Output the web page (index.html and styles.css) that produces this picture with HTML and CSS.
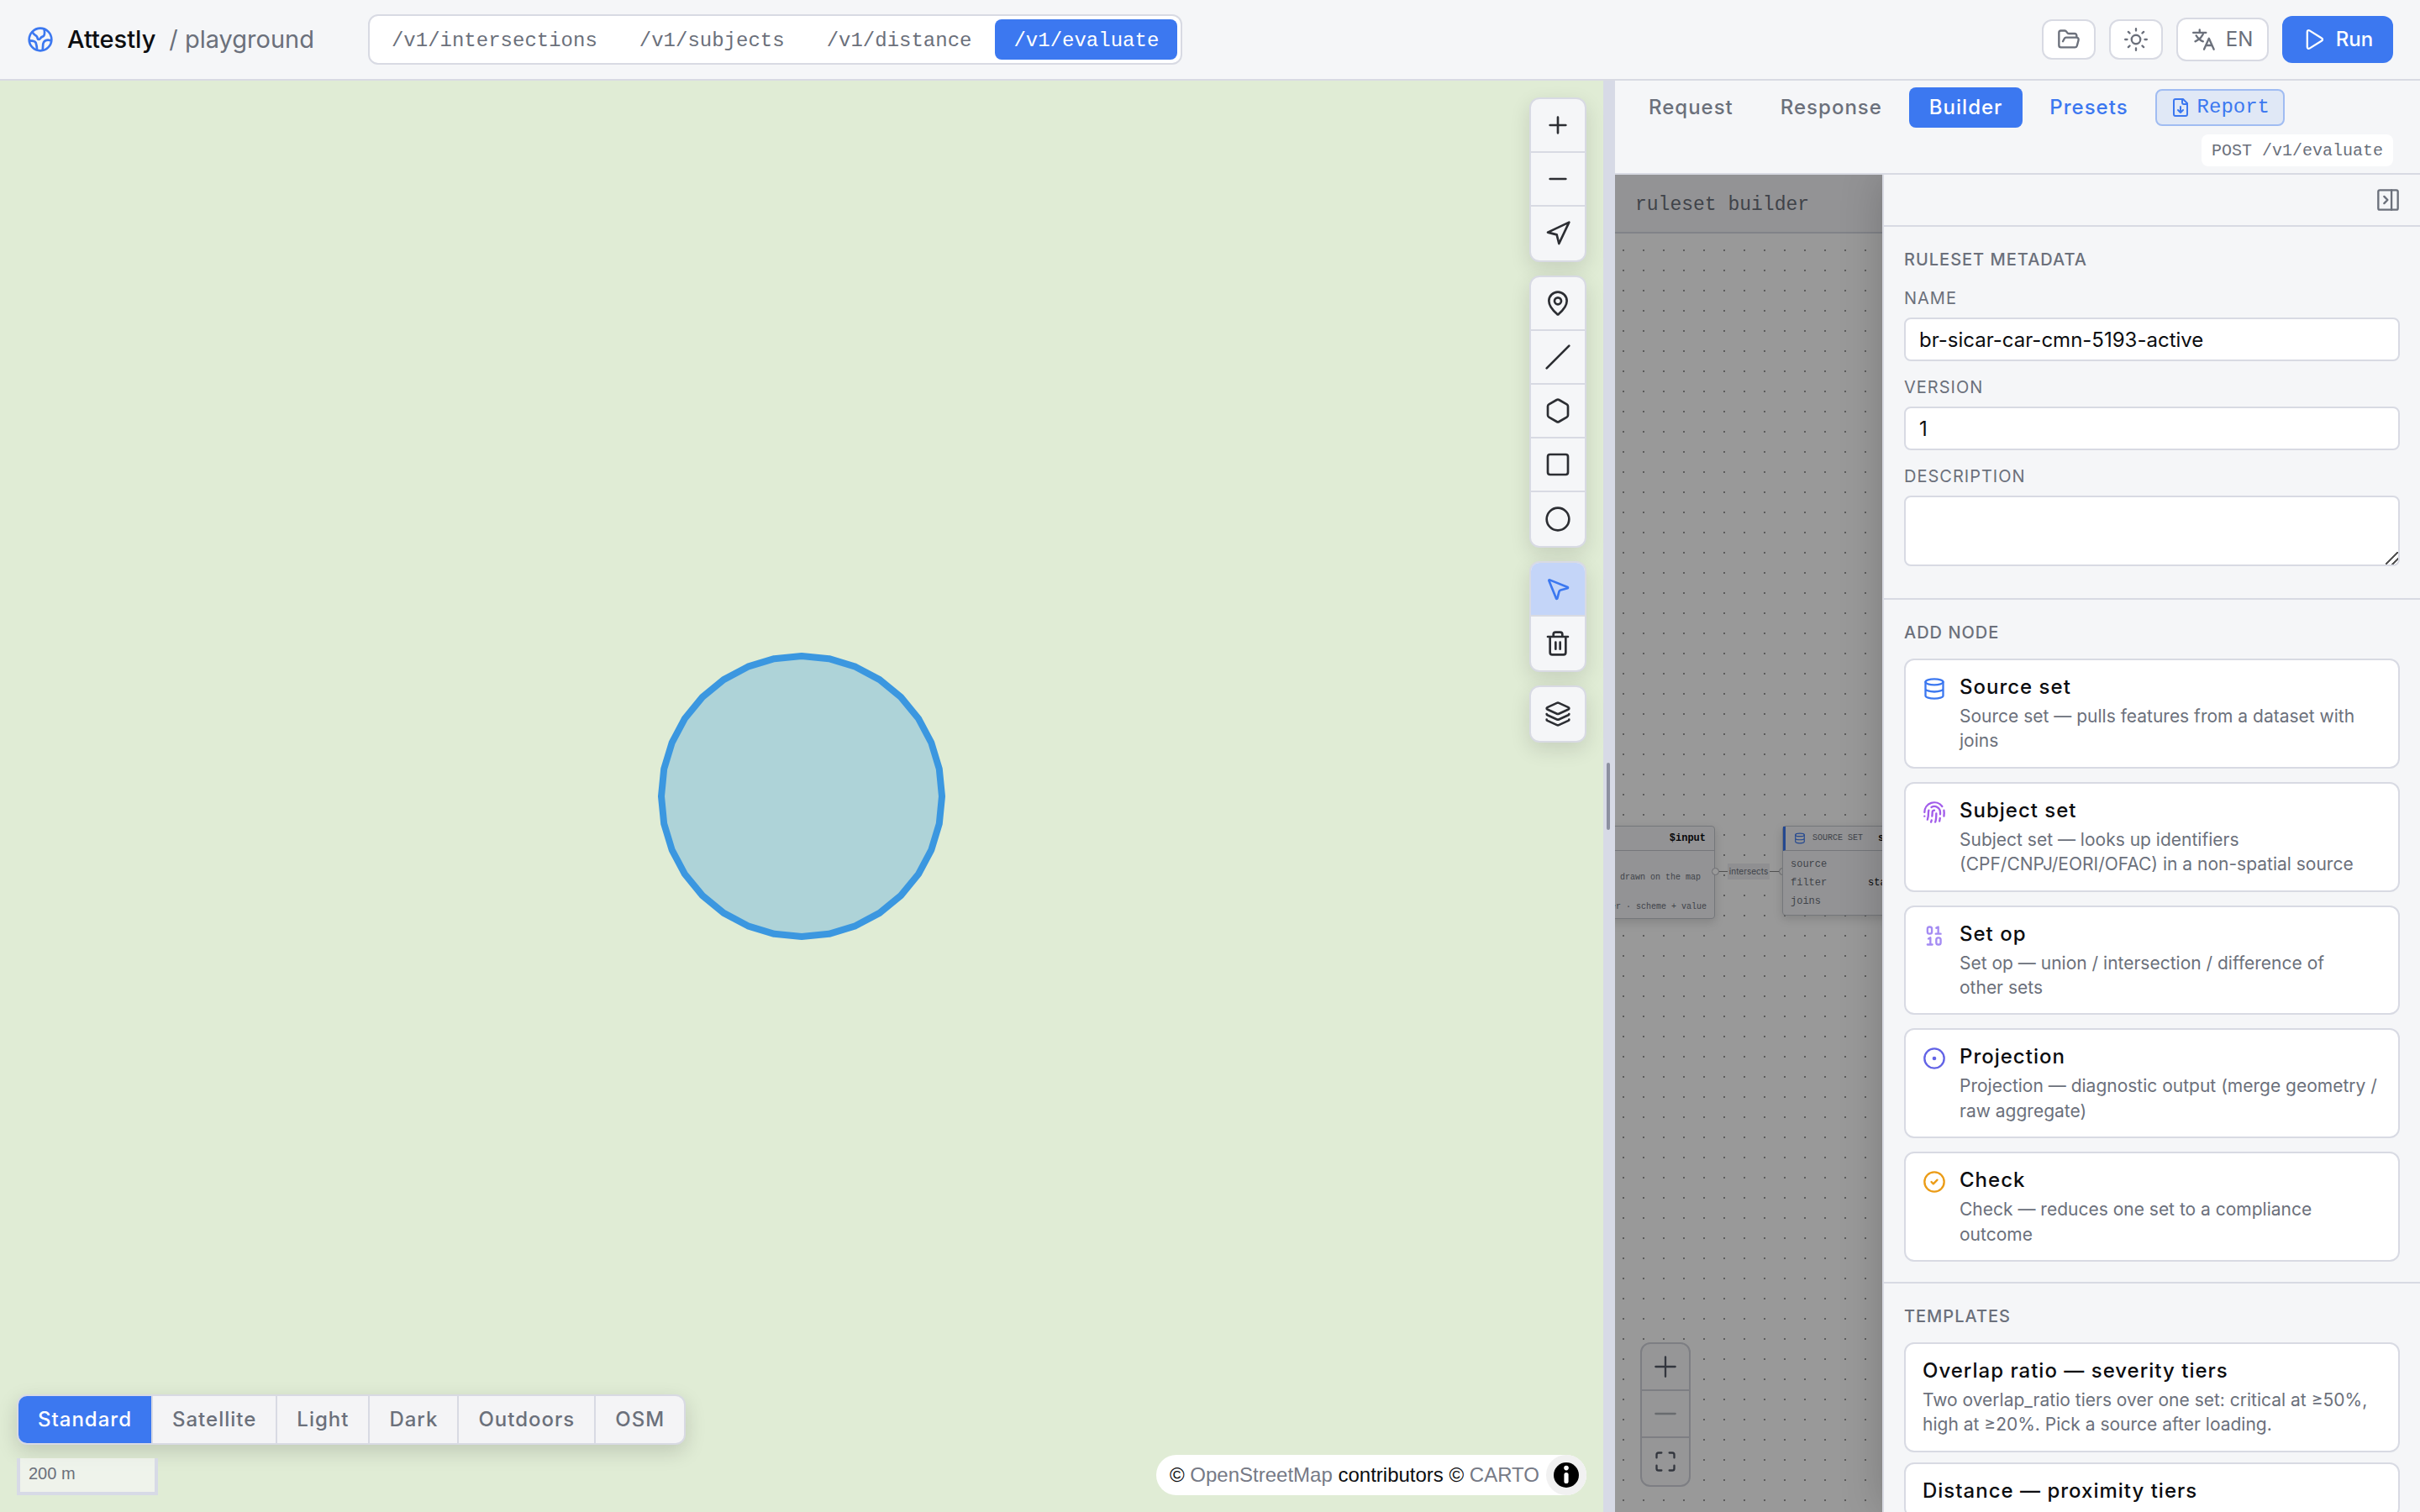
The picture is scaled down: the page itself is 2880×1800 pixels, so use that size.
FILE: index.html
```html
<!DOCTYPE html>
<html lang="en">
<head>
<meta charset="utf-8">
<title>Attestly / playground</title>
<link rel="stylesheet" href="styles.css">
</head>
<body>
<div class="app">
  <header class="topbar">
    <a class="brand" href="#">
      <svg class="icon icon-lg brand-mark" viewBox="0 0 24 24"><circle cx="12" cy="12" r="10"/><path d="M5 5.500c1 2.500 3 2.500 4 4s0 2.500 1.500 2.500S12 10 14 9.500s2-3.500 1.500-6.500M2.500 13c3 0 5 .5 5.500 2s1 3 1 6M21.500 13c-3-1-5.500 0-6.500 1.500s-.5 4-1 7"/></svg>
      <span class="brand-name">Attestly</span>
      <span class="brand-sub">/ playground</span>
    </a>
    <nav class="endpoints" aria-label="Endpoint">
      <button class="endpoint">/v1/intersections</button>
      <button class="endpoint">/v1/subjects</button>
      <button class="endpoint">/v1/distance</button>
      <button class="endpoint is-active">/v1/evaluate</button>
    </nav>
    <div class="actions">
      <button class="action action-icon" aria-label="Open">
        <svg class="icon" viewBox="0 0 24 24"><path d="m6 14 1.500-2.900A2 2 0 0 1 9.240 10H20a2 2 0 0 1 1.940 2.500l-1.540 6a2 2 0 0 1-1.950 1.500H4a2 2 0 0 1-2-2V5a2 2 0 0 1 2-2h3.900a2 2 0 0 1 1.690.9l.81 1.200a2 2 0 0 0 1.670.9H18a2 2 0 0 1 2 2v2"/></svg>
      </button>
      <button class="action action-icon" aria-label="Theme">
        <svg class="icon" viewBox="0 0 24 24"><circle cx="12" cy="12" r="4.500"/><path d="M12 1v2M12 21v2M4.200 4.200l1.400 1.400M18.400 18.400l1.400 1.400M1 12h2M21 12h2M5.600 18.400l-1.400 1.400M19.800 4.200l-1.400 1.400"/></svg>
      </button>
      <button class="action action-lang">
        <svg class="icon" viewBox="0 0 24 24"><path d="M1 5h13M7.500 2v3M11.500 5c-1 4-4 7-8.500 9M4 8c2 3 4 5 7 6M12 22l5-11 5 11M14 18h6"/></svg>
        EN
      </button>
      <button class="action action-run">
        <svg class="icon" viewBox="0 0 24 24"><path d="M5 4.200v15.600a1.500 1.500 0 0 0 2.300 1.300l12.500-7.800a1.500 1.500 0 0 0 0-2.600L7.300 2.900A1.500 1.500 0 0 0 5 4.200z"/></svg>
        Run
      </button>
    </div>
  </header>

  <main class="workspace">
    <section class="map" aria-label="Map">
      <svg class="shape" viewBox="-180 -180 360 360"><polygon id="area" points=""/></svg>

      <div class="tools">
        <div class="tool-group">
          <button class="tool" aria-label="Zoom in"><svg class="icon icon-lg" viewBox="0 0 24 24"><path d="M5 12h14M12 5v14"/></svg></button>
          <button class="tool" aria-label="Zoom out"><svg class="icon icon-lg" viewBox="0 0 24 24"><path d="M5 12h14"/></svg></button>
          <button class="tool" aria-label="Locate"><svg class="icon icon-lg" viewBox="0 0 24 24"><path d="M3 11 22 2l-9 19-2-8z"/></svg></button>
        </div>
        <div class="tool-group">
          <button class="tool" aria-label="Point"><svg class="icon icon-lg" viewBox="0 0 24 24"><path d="M20 10c0 5-5.540 10.190-7.400 11.800a1 1 0 0 1-1.200 0C9.540 20.190 4 15 4 10a8 8 0 0 1 16 0"/><circle cx="12" cy="10" r="3"/></svg></button>
          <button class="tool" aria-label="Line"><svg class="icon icon-lg" viewBox="0 0 24 24"><path d="M22 2 2 22"/></svg></button>
          <button class="tool" aria-label="Polygon"><svg class="icon icon-lg" viewBox="0 0 24 24"><path d="M21 16V8a2 2 0 0 0-1-1.730l-7-4a2 2 0 0 0-2 0l-7 4A2 2 0 0 0 3 8v8a2 2 0 0 0 1 1.730l7 4a2 2 0 0 0 2 0l7-4A2 2 0 0 0 21 16z"/></svg></button>
          <button class="tool" aria-label="Rectangle"><svg class="icon icon-lg" viewBox="0 0 24 24"><rect x="3" y="3" width="18" height="18" rx="2"/></svg></button>
          <button class="tool" aria-label="Circle"><svg class="icon icon-lg" viewBox="0 0 24 24"><circle cx="12" cy="12" r="10"/></svg></button>
        </div>
        <div class="tool-group">
          <button class="tool is-active" aria-label="Select"><svg class="icon icon-lg" viewBox="0 0 24 24"><path d="M4.040 4.690a.5.5 0 0 1 .65-.65l16 6.500a.5.5 0 0 1-.06.950l-6.130 1.580a2 2 0 0 0-1.430 1.430l-1.580 6.130a.5.5 0 0 1-.950.06z"/></svg></button>
          <button class="tool" aria-label="Delete"><svg class="icon icon-lg" viewBox="0 0 24 24"><path d="M3 6h18M19 6v14a2 2 0 0 1-2 2H7a2 2 0 0 1-2-2V6M8 6V4a2 2 0 0 1 2-2h4a2 2 0 0 1 2 2v2M10 11v6M14 11v6"/></svg></button>
        </div>
        <div class="tool-group">
          <button class="tool" aria-label="Layers"><svg class="icon icon-lg" viewBox="0 0 24 24"><path d="M12.830 2.180a2 2 0 0 0-1.660 0L2.600 6.080a1 1 0 0 0 0 1.830l8.580 3.910a2 2 0 0 0 1.660 0l8.580-3.900a1 1 0 0 0 0-1.830zM2 12a1 1 0 0 0 .58.910l8.600 3.910a2 2 0 0 0 1.650 0l8.580-3.900A1 1 0 0 0 22 12M2 17a1 1 0 0 0 .58.910l8.600 3.910a2 2 0 0 0 1.650 0l8.580-3.900A1 1 0 0 0 22 17"/></svg></button>
        </div>
      </div>

      <div class="map-footer">
        <div class="map-left">
          <div class="basemaps">
            <button class="basemap is-active">Standard</button>
            <button class="basemap">Satellite</button>
            <button class="basemap">Light</button>
            <button class="basemap">Dark</button>
            <button class="basemap">Outdoors</button>
            <button class="basemap">OSM</button>
          </div>
          <div class="scale">200 m</div>
        </div>
        <div class="attribution">
          <span>© <a href="#">OpenStreetMap</a> contributors © <a href="#">CARTO</a></span>
          <button class="info" aria-label="Toggle attribution"><svg viewBox="0 0 24 24"><circle cx="12" cy="12" r="7.500"/><rect class="mark" x="10.700" y="10.500" width="2.600" height="6.500" rx="1.300"/><circle class="mark" cx="12" cy="7.800" r="1.400"/></svg></button>
        </div>
      </div>
    </section>

    <div class="divider"><span class="grip"></span></div>

    <section class="panel">
      <div class="tabs">
        <button class="tab">Request</button>
        <button class="tab">Response</button>
        <button class="tab is-active">Builder</button>
        <button class="tab tab-link">Presets</button>
        <button class="report">
          <svg class="icon icon-sm" viewBox="0 0 24 24"><path d="M15 2H6a2 2 0 0 0-2 2v16a2 2 0 0 0 2 2h12a2 2 0 0 0 2-2V7zM14 2v4a2 2 0 0 0 2 2h4M12 18v-7M9 15l3 3 3-3"/></svg>
          Report
        </button>
        <code class="route">POST /v1/evaluate</code>
      </div>

      <div class="builder">
        <div class="builder-bar">ruleset builder</div>
        <div class="canvas">
          <article class="node node-input">
            <header class="node-head"><b>$input</b></header>
            <div class="node-body">
              <p class="line-geometry">drawn on the map</p>
              <p>identifier · scheme + value</p>
            </div>
          </article>
          <div class="edge"><span class="edge-label">intersects</span></div>
          <i class="port port-out"></i>
          <i class="port port-in"></i>
          <article class="node node-source">
            <header class="node-head">
              <svg class="icon icon-xs" viewBox="0 0 24 24"><ellipse cx="12" cy="5" rx="9" ry="3"/><path d="M3 5v14a9 3 0 0 0 18 0V5M3 12a9 3 0 0 0 18 0"/></svg>
              SOURCE SET <b>sicar</b>
            </header>
            <dl class="node-rows">
              <dt>source</dt><dd></dd>
              <dt>filter</dt><dd>status</dd>
              <dt>joins</dt><dd></dd>
            </dl>
          </article>
          <div class="controls">
            <button class="control" aria-label="Zoom in"><svg class="icon" viewBox="0 0 24 24"><path d="M2 12h20M12 2v20"/></svg></button>
            <button class="control is-disabled" aria-label="Zoom out"><svg class="icon" viewBox="0 0 24 24"><path d="M2 12h20"/></svg></button>
            <button class="control" aria-label="Fit view"><svg class="icon" viewBox="0 0 24 24"><path d="M3 8V5a2 2 0 0 1 2-2h3M16 3h3a2 2 0 0 1 2 2v3M21 16v3a2 2 0 0 1-2 2h-3M8 21H5a2 2 0 0 1-2-2v-3"/></svg></button>
          </div>
        </div>
        <div class="scrim"></div>

        <aside class="drawer">
          <div class="drawer-head">
            <button class="collapse" aria-label="Collapse panel"><svg class="icon" viewBox="0 0 24 24"><rect x="2" y="2" width="20" height="20" rx="1.500"/><path d="M15.500 2v20M8 8.500l3.500 3.500L8 15.500"/></svg></button>
          </div>

          <section class="group group-meta">
            <h2>RULESET METADATA</h2>
            <div class="field"><label for="name">NAME</label><input id="name" type="text" value="br-sicar-car-cmn-5193-active"></div>
            <div class="field"><label for="version">VERSION</label><input id="version" type="text" value="1"></div>
            <div class="field"><label for="description">DESCRIPTION</label><textarea id="description"></textarea></div>
          </section>

          <section class="group">
            <h2>ADD NODE</h2>
            <div class="cards">
              <button class="card">
                <svg class="icon blue" viewBox="0 0 24 24"><ellipse cx="12" cy="5" rx="9" ry="3"/><path d="M3 5v14a9 3 0 0 0 18 0V5M3 12a9 3 0 0 0 18 0"/></svg>
                <span class="card-text"><span class="card-title">Source set</span><span class="card-desc">Source set — pulls features from a dataset with joins</span></span>
              </button>
              <button class="card">
                <svg class="icon purple" viewBox="0 0 24 24"><path d="M12 10a2 2 0 0 0-2 2c0 1.020-.1 2.510-.26 4M14 13.120c0 2.380 0 6.380-1 8.880M17.290 21.020c.12-.6.430-2.300.5-3.020M2 12a10 10 0 0 1 18-6M2 16h.01M21.800 16c.2-2 .131-5.354 0-6M5 19.500C5.500 18 6 15 6 12a6 6 0 0 1 .34-2M8.650 22c.210-.660.450-1.320.570-2M9 6.800a6 6 0 0 1 9 5.200v2"/></svg>
                <span class="card-text"><span class="card-title">Subject set</span><span class="card-desc">Subject set — looks up identifiers (CPF/CNPJ/EORI/OFAC) in a non-spatial source</span></span>
              </button>
              <button class="card">
                <svg class="icon violet" viewBox="0 0 24 24"><rect x="5" y="3" width="4.500" height="7" rx="2"/><path d="M14 4l2-1v7M13.500 10h5M6 15l2-1v7M5 21h5"/><rect x="14" y="14" width="4.500" height="7" rx="2"/></svg>
                <span class="card-text"><span class="card-title">Set op</span><span class="card-desc">Set op — union / intersection / difference of other&nbsp;sets</span></span>
              </button>
              <button class="card">
                <svg class="icon indigo" viewBox="0 0 24 24"><circle cx="12" cy="12" r="10"/><circle cx="12" cy="12" r="1"/></svg>
                <span class="card-text"><span class="card-title">Projection</span><span class="card-desc">Projection — diagnostic output (merge geometry / raw aggregate)</span></span>
              </button>
              <button class="card">
                <svg class="icon amber" viewBox="0 0 24 24"><circle cx="12" cy="12" r="10"/><path d="m9 12 2 2 4-4"/></svg>
                <span class="card-text"><span class="card-title">Check</span><span class="card-desc">Check — reduces one set to a compliance outcome</span></span>
              </button>
            </div>
          </section>

          <section class="group">
            <h2>TEMPLATES</h2>
            <div class="cards cards-tight">
              <button class="card"><span class="card-text"><span class="card-title">Overlap ratio — severity tiers</span><span class="card-desc">Two overlap_ratio tiers over one set: critical at ≥50%, high at ≥20%. Pick a source after loading.</span></span></button>
              <button class="card"><span class="card-text"><span class="card-title">Distance — proximity tiers</span></span></button>
            </div>
          </section>
        </aside>
      </div>
    </section>
  </main>
</div>
<script src="map.js"></script>
</body>
</html>
```
FILE: styles.css
```css
:root {
  --surface: #f5f6f8;
  --line: #d8dae3;
  --muted: #6b707b;
  --ink: #0c0d10;
  --blue: #3c78f0;
  --sans: Inter, "Liberation Sans", sans-serif;
  --mono: "Liberation Mono", monospace;
}

* { box-sizing: border-box; }

body {
  margin: 0;
  background: var(--surface);
  color: var(--ink);
  font-family: var(--sans);
  font-size: 24px;
  line-height: 30px;
}

button {
  margin: 0;
  padding: 0;
  border: 0;
  background: none;
  color: inherit;
  font: inherit;
  cursor: pointer;
}

a { color: inherit; text-decoration: none; }
h2, p, dl, dd { margin: 0; }

.icon {
  width: 28px;
  height: 28px;
  flex: none;
  fill: none;
  stroke: currentColor;
  stroke-width: 2;
  stroke-linecap: round;
  stroke-linejoin: round;
}
.icon-lg { width: 32px; height: 32px; }
.icon-sm { width: 24px; height: 24px; }
.icon-xs { width: 14px; height: 14px; }

.app {
  display: flex;
  flex-direction: column;
  height: 100vh;
  overflow: hidden;
}

/* Top bar */
.topbar {
  display: flex;
  align-items: center;
  flex: none;
  gap: 64px;
  height: 96px;
  padding: 0 32px;
  border-bottom: 2px solid var(--line);
}
.brand {
  display: flex;
  align-items: center;
  gap: 16px;
  font-size: 29px;
  font-weight: 500;
  line-height: 36px;
}
.brand-mark { color: var(--blue); }
.brand-sub { color: var(--muted); font-weight: 400; }
.endpoints {
  display: flex;
  gap: 6px;
  padding: 4px;
  border: 2px solid var(--line);
  border-radius: 12px;
  background: #fff;
}
.endpoint {
  height: 48px;
  padding: 4px 22px 0;
  border-radius: 8px;
  color: var(--muted);
  font-family: var(--mono);
}
.endpoint.is-active { background: var(--blue); color: #fff; }
.actions {
  display: flex;
  align-items: center;
  gap: 16px;
  margin-left: auto;
}
.action {
  display: flex;
  align-items: center;
  justify-content: center;
  gap: 12px;
  border: 2px solid var(--line);
  border-radius: 12px;
  background: #fff;
  color: var(--muted);
}
.action-icon { width: 64px; height: 48px; }
.action-lang { width: 110px; height: 52px; }
.action-run {
  width: 132px;
  height: 56px;
  border: 0;
  background: var(--blue);
  color: #fff;
  font-weight: 500;
}

/* Workspace */
.workspace {
  display: grid;
  grid-template-columns: 1908fr 14px 958fr;
  flex: 1;
  min-height: 0;
}

/* Map */
.map {
  position: relative;
  display: flex;
  flex-direction: column;
  justify-content: space-between;
  padding: 20px;
  background: #e0ecd5;
}
.shape {
  position: absolute;
  top: 50%;
  left: 50%;
  width: 360px;
  height: 360px;
  transform: translate(-50%, -50%);
  fill: #3b97e04d;
  stroke: #3b97e0;
  stroke-width: 8;
  stroke-linejoin: round;
}
.tools {
  display: flex;
  flex-direction: column;
  align-self: flex-end;
  gap: 16px;
}
.tool-group {
  overflow: hidden;
  border: 2px solid var(--line);
  border-radius: 12px;
  background: var(--surface);
  box-shadow: 0 8px 24px #0000001f;
}
.tool {
  display: flex;
  align-items: center;
  justify-content: center;
  width: 64px;
  height: 64px;
  color: #2c2e33;
}
.tool:not(:last-child) { border-bottom: 2px solid var(--line); }
.tool.is-active { background: #c4d5f8; color: var(--blue); }

.map-footer {
  display: flex;
  align-items: flex-end;
  justify-content: space-between;
}
.map-left {
  display: flex;
  flex-direction: column;
  align-items: flex-start;
  gap: 16px;
}
.basemaps {
  display: flex;
  overflow: hidden;
  border: 2px solid var(--line);
  border-radius: 12px;
  background: #f4f4f6;
  box-shadow: 0 8px 24px #00000026;
}
.basemap {
  height: 56px;
  padding: 0 23px;
  color: var(--muted);
  font-weight: 500;
  letter-spacing: 1px;
}
.basemap + .basemap { border-left: 2px solid var(--line); }
.basemap.is-active { background: var(--blue); color: #fff; }
.scale {
  width: 168px;
  height: 44px;
  padding: 4px 10px;
  border: 4px solid #d7dae6;
  border-top: 0;
  background: #f8f8fa99;
  color: var(--muted);
  font: 20px/28px "Liberation Sans", sans-serif;
}
.attribution {
  display: flex;
  align-items: center;
  gap: 8px;
  height: 48px;
  padding-left: 16px;
  border-radius: 24px;
  background: #fff;
  font: 24px/40px "Liberation Sans", sans-serif;
}
.attribution a { color: #767a86; }
.info {
  width: 48px;
  height: 48px;
  border-radius: 50%;
  background: #f1f1f1;
}
.info svg { display: block; width: 48px; height: 48px; }
.info .mark { fill: #fff; }

.divider {
  display: flex;
  align-items: center;
  padding-left: 4px;
  background: #d7dae6;
}
.grip { width: 4px; height: 80px; border-radius: 2px; background: #8c90a0; }

/* Right panel */
.panel {
  display: flex;
  flex-direction: column;
  min-width: 0;
  min-height: 0;
}
.tabs {
  display: flex;
  flex-wrap: wrap;
  align-items: center;
  gap: 8px;
  padding: 8px 32px 8px 16px;
  border-bottom: 2px solid var(--line);
}
.tab {
  height: 48px;
  padding: 0 24px;
  border-radius: 8px;
  color: var(--muted);
  font-weight: 500;
  letter-spacing: 1px;
}
.tab.is-active { background: var(--blue); color: #fff; }
.tab-link { color: var(--blue); }
.report {
  display: flex;
  align-items: center;
  gap: 8px;
  height: 44px;
  padding: 0 16px;
  border: 2px solid #a0bcf2;
  border-radius: 8px;
  background: #e0e8f6;
  color: var(--blue);
  font-family: var(--mono);
}
.route {
  margin-left: auto;
  padding: 5px 12px 3px;
  border-radius: 8px;
  background: #fff;
  color: var(--muted);
  font: 20px/30px var(--mono);
}

/* Builder canvas */
.builder {
  position: relative;
  display: flex;
  flex: 1;
  flex-direction: column;
  min-height: 0;
  overflow: hidden;
}
.builder-bar {
  height: 70px;
  padding: 21px 24px 0;
  border-bottom: 2px solid var(--line);
  color: var(--muted);
  font: 23px/30px var(--mono);
}
.canvas {
  position: relative;
  flex: 1;
  overflow: hidden;
  background: #fff radial-gradient(circle, #999 1px, transparent 1px) -2px 8px / 24px 24px;
}
.scrim { position: absolute; inset: 0; background: #00000066; }
.node {
  position: absolute;
  border: 1px solid #c4c6cd;
  border-radius: 4px;
  background: var(--surface);
  color: var(--muted);
  font: 10px/14px var(--mono);
  box-shadow: 0 4px 12px #00000026;
}
.node b { color: var(--ink); font-size: 12px; }
.node-head {
  display: flex;
  align-items: center;
  gap: 8px;
  height: 29px;
  padding: 0 10px;
  border-bottom: 1px solid #c4c6cd;
}
.node-input {
  top: 705px;
  left: -120px;
  width: 239px;
  height: 111px;
  text-align: right;
}
.node-input .node-head { justify-content: flex-end; }
.node-body { padding: 25px 9px; }
.node-body p + p { margin-top: 21px; }
.node-body .line-geometry { padding-right: 7px; }
.node-source {
  top: 705px;
  left: 199px;
  width: 200px;
  height: 107px;
}
.node-source .node-head { border-left: 3px solid var(--blue); }
.node-source .icon { color: var(--blue); }
.node-source b { margin-left: 10px; }
.node-rows {
  display: grid;
  grid-template-columns: 92px 1fr;
  padding: 5px 9px;
  font-size: 12px;
  line-height: 22px;
}
.node-rows dd { color: var(--ink); }
.edge {
  position: absolute;
  top: 750px;
  left: 119px;
  display: grid;
  place-items: center;
  width: 80px;
  height: 19px;
  background: linear-gradient(#888, #888) center / 100% 1px no-repeat;
}
.edge-label {
  padding: 0 2px;
  background: #eeeff2;
  color: var(--muted);
  font-size: 10px;
  line-height: 19px;
}
.port {
  position: absolute;
  top: 755px;
  width: 9px;
  height: 9px;
  border: 1px solid #b5b7be;
  border-radius: 50%;
  background: #fff;
}
.port-out { left: 115px; }
.port-in { left: 195px; }
.controls {
  position: absolute;
  bottom: 30px;
  left: 30px;
  overflow: hidden;
  border: 2px solid #d0d2da;
  border-radius: 12px;
  background: #fafafc;
}
.control {
  display: flex;
  align-items: center;
  justify-content: center;
  width: 56px;
  height: 56px;
  color: #555b68;
}
.control:not(:last-child) { border-bottom: 2px solid #d0d2da; }
.control.is-disabled { color: #b0b2b8; }

/* Drawer */
.drawer {
  position: absolute;
  top: 0;
  right: 0;
  bottom: 0;
  width: 640px;
  overflow: hidden;
  border-left: 2px solid var(--line);
  background: var(--surface);
  box-shadow: 0 0 48px #00000033;
}
.drawer-head {
  display: flex;
  align-items: center;
  justify-content: flex-end;
  height: 62px;
  padding: 0 24px;
  border-bottom: 2px solid var(--line);
  color: var(--muted);
}
.collapse { display: flex; }
.group {
  padding: 24px;
  border-bottom: 2px solid var(--line);
}
.group-meta { padding-bottom: 38px; }
.group h2 {
  margin-bottom: 16px;
  color: var(--muted);
  font-size: 20px;
  font-weight: 500;
  line-height: 30px;
  letter-spacing: 1px;
}
.field {
  display: flex;
  flex-direction: column;
  gap: 8px;
}
.field + .field { margin-top: 16px; }
.field label {
  color: var(--muted);
  font-size: 20px;
  letter-spacing: 1px;
}
.field input,
.field textarea {
  width: 100%;
  height: 52px;
  padding: 0 16px;
  border: 2px solid var(--line);
  border-radius: 8px;
  background: #fff;
  color: var(--ink);
  font: inherit;
}
.field textarea { height: 84px; resize: vertical; }
.field textarea::-webkit-resizer {
  background: linear-gradient(135deg, transparent 46%, #555 46% 54%, transparent 54% 72%, #555 72% 80%, transparent 80%);
}
.cards { display: flex; flex-direction: column; gap: 16px; }
.cards-tight { gap: 12px; }
.card {
  display: flex;
  align-items: flex-start;
  gap: 16px;
  padding: 18px 20px 16px;
  border: 2px solid var(--line);
  border-radius: 12px;
  background: #fff;
  text-align: left;
}
.card .icon { margin-top: 2px; }
.card-text { display: flex; flex-direction: column; gap: 6px; }
.card-title { font-weight: 500; line-height: 28px; letter-spacing: 1px; }
.card-desc { color: var(--muted); font-size: 21px; line-height: 1.4; }
.blue { color: #3c78f0; }
.purple { color: #a15cea; }
.violet { color: #a48bf3; }
.indigo { color: #6263e6; }
.amber { color: #eb9c17; }
```
FILE: map.js
```js
// Buffer drawn as a 32-sided polygon around the map centre.
const SIDES = 32;
const RADIUS = 167;
const points = Array.from({ length: SIDES }, (_, i) => {
  const angle = (2 * Math.PI * i) / SIDES;
  return (RADIUS * Math.cos(angle)).toFixed(1) + "," + (RADIUS * Math.sin(angle)).toFixed(1);
});
document.getElementById("area").setAttribute("points", points.join(" "));
```
